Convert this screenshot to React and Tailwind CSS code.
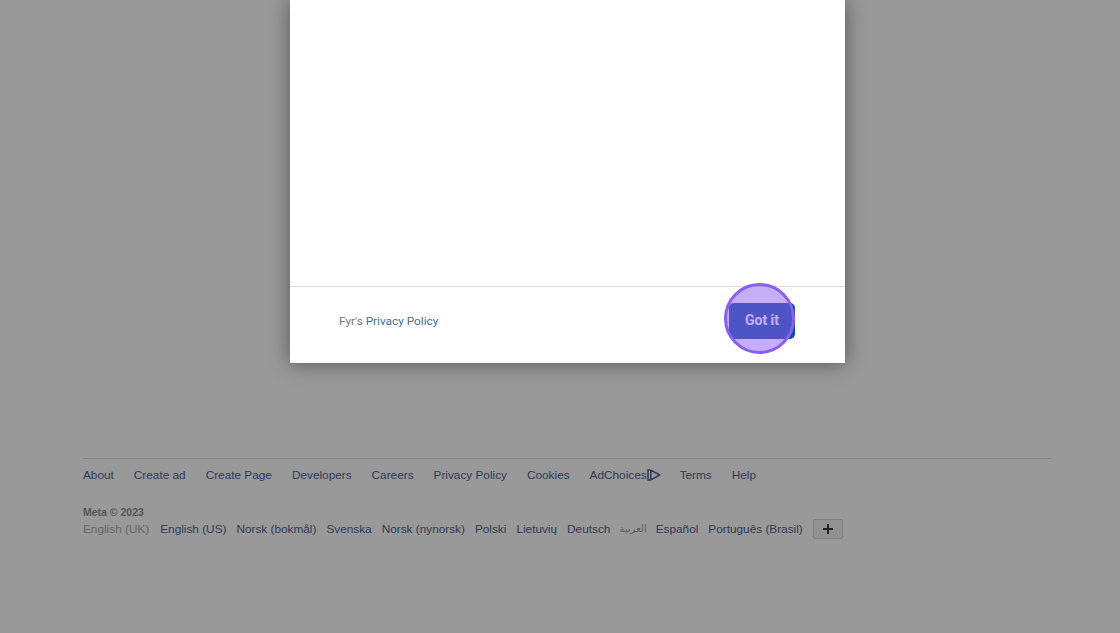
function Ad() {
  return (
    <svg width="14" height="12" viewBox="0 0 14 12" className="-mr-[1px] block" fill="none" stroke="#2f3a58" strokeWidth="1.5">
      <path d="M3.4 1H1v10h2.4" />
      <path d="M3.8 1.2 12.8 6l-9 4.8z" strokeLinejoin="round" />
    </svg>
  );
}

const top = ["About", "Create ad", "Create Page", "Developers", "Careers", "Privacy Policy", "Cookies"];
const langs = ["Norsk (bokmål)", "Svenska", "Norsk (nynorsk)", "Polski", "Lietuvių", "Deutsch", "العربية", "Español", "Português (Brasil)"];

export default function App() {
  return (
    <div className="h-[633px] w-[1120px] overflow-hidden bg-[#999999] font-['Liberation_Sans',Arial,sans-serif]">
      <div className="ml-[290px] flex h-[363px] w-[555px] flex-col bg-white shadow-[0_0_20px_rgba(0,0,0,0.45)]">
        <div className="h-[287px] border-b border-[#dddddd]" />
        <div className="relative flex flex-1 items-center justify-between pb-[8px] pl-[49px] pr-[50px] font-['Roboto',sans-serif]">
          <p className="mt-[2px] text-[11.8px] text-[#777777]">
            Fyr's <span className="text-[#3f6ea8]">Privacy Policy</span>
          </p>
          <button className="h-[36px] w-[66px] rounded-[5px] bg-[#0f4f96] pb-[2px] text-[14px] font-bold text-white">
            Got it
          </button>
          <div className="absolute left-[434px] top-[-4px] h-[71px] w-[71px] rounded-full border-[3px] border-[#8b5cf6] bg-[#8b5cf6]/50" />
        </div>
      </div>

      <footer className="mx-[83px] mt-[95px] w-[968px] border-t border-[#858585] text-[11.8px] leading-[16px] text-[#2f3a58]">
        <div className="mt-[8px] flex items-center gap-[20px]">
          {top.map((t) => (
            <span key={t}>{t}</span>
          ))}
          <span className="flex items-center">
            AdChoices
            <Ad />
          </span>
          <span>Terms</span>
          <span>Help</span>
        </div>
        <p className="mt-[23px] text-[10.5px] font-bold leading-[12px] text-[#555555]">Meta © 2023</p>
        <div className="mt-[1px] flex items-center gap-[10px]">
          <span className="mr-[1px] text-[#666666]">English (UK)</span>
          <span>English (US)</span>
          {langs.map((t) => (
            <span key={t} className={t === "العربية" ? "mx-[-1px] font-['DejaVu_Sans',sans-serif] text-[10px] text-[#555a6e]" : ""}>{t}</span>
          ))}
          <span className="flex h-[20px] w-[30px] items-center justify-center rounded-[2px] border border-[#7f7f7f] bg-[#929292]">
            <svg width="12" height="12" viewBox="0 0 12 12"><path d="M1 6h10M6 1v10" stroke="#222" strokeWidth="2" /></svg>
          </span>
        </div>
      </footer>
    </div>
  );
}
